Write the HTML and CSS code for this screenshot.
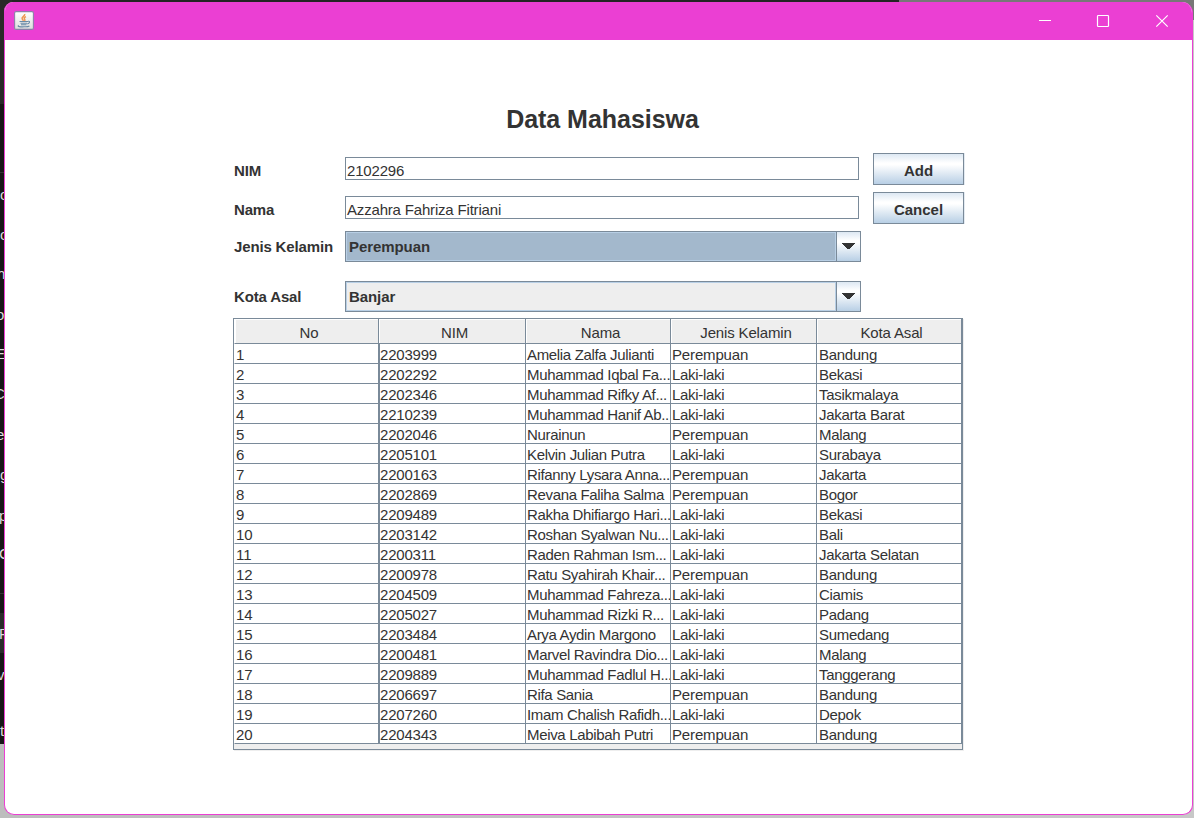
FILE: index.html
```html
<!DOCTYPE html>
<html lang="id">
<head>
<meta charset="utf-8">
<title>Data Mahasiswa</title>
<link rel="stylesheet" href="styles.css">
</head>
<body>
<div class="desktop">
  <div class="editor" id="editor"></div>
  <main class="window">
    <header class="titlebar">
      <svg class="java" width="20" height="20" viewBox="0 0 20 20">
        <defs><linearGradient id="g" x2="0" y2="1"><stop stop-color="#fff"/><stop offset="1" stop-color="#dcdcdc"/></linearGradient></defs>
        <rect x=".6" y=".6" width="18.8" height="17.8" rx="1.5" fill="url(#g)" stroke="#8c7fa8" stroke-width="1.1"/>
        <path d="M10.700 3c.8 2-3.200 2.600-2.600 4.700.2.900 1.200 1.400 1.400 2M12 5.700c-1.800.9-2.200 1.500-1.300 2.500.5.700.2 1.200-.3 1.600" fill="none" stroke="#ee9550" stroke-width="1.500"/>
        <path d="M5.500 10.500h8.500M6.500 12.300h6.500M7 13.700h5.500M14 10.300c2.500-.5 1.600 2.300-.7 2.600M4.800 14.500c-2.300 1 2 1.500 5.200 1.300 3 0 5-.5 5.400-1" fill="none" stroke="#6a8ba6" stroke-width="1.100"/>
      </svg>
      <svg class="controls" width="134" height="14" viewBox="0 0 134 14" fill="none" stroke="#fff">
        <path d="M0 6.500h12"/>
        <rect x="58.500" y="1.500" width="11" height="11" rx=".8" stroke-width="1.200"/>
        <path d="M117.300 1.300l11.400 11.400M128.700 1.300l-11.400 11.400" stroke-width="1.200"/>
      </svg>
    </header>
    <section class="content">
      <h1 class="heading">Data Mahasiswa</h1>
      <div class="row">
        <label class="label">NIM</label><div class="field">2102296</div><div class="button">Add</div>
      </div>
      <div class="row row-name">
        <label class="label">Nama</label><div class="field">Azzahra Fahriza Fitriani</div><div class="button">Cancel</div>
      </div>
      <div class="row row-gender">
        <label class="label">Jenis Kelamin</label>
        <div class="combo"><div class="value focused">Perempuan</div><div class="arrow"><svg width="13" height="6" viewBox="0 0 13 6" shape-rendering="crispEdges"><path d="M0 0h13v1h-1v1h-1v1h-1v1H9v1H8v1H5V5H4V4H3V3H2V2H1V1H0z" fill="#333"/></svg></div></div>
      </div>
      <div class="row row-city">
        <label class="label">Kota Asal</label>
        <div class="combo"><div class="value">Banjar</div><div class="arrow"><svg width="13" height="6" viewBox="0 0 13 6" shape-rendering="crispEdges"><path d="M0 0h13v1h-1v1h-1v1h-1v1H9v1H8v1H5V5H4V4H3V3H2V2H1V1H0z" fill="#333"/></svg></div></div>
      </div>
      <div class="table">
        <div class="line head"><span class="cell">No</span><span class="cell">NIM</span><span class="cell">Nama</span><span class="cell">Jenis Kelamin</span><span class="cell">Kota Asal</span></div>
        <div id="rows"></div>
      </div>
    </section>
  </main>
</div>
<script src="app.js"></script>
</body>
</html>
```

FILE: styles.css
```css
* { box-sizing: border-box; }
body { margin: 0; font-family: "Liberation Sans", Arial, sans-serif; font-size: 15px; color: #333; }
.desktop { position: relative; width: 1194px; height: 818px; overflow: hidden; padding: 2px 1px 3px 4px;
  background: linear-gradient(90deg, #242424 0 899px, #777 899px) 0 0 / 100% 20px no-repeat, linear-gradient(90deg, #bdbdbd, #c8c8c8); }
.editor { position: absolute; left: 0; top: 0; width: 12px; height: 744px; overflow: hidden;
  background: linear-gradient(#292929 0 104px, #171717 104px 172px, #333 172px 173px, #171717 173px 593px, #333 593px 594px, #171717 594px 613px, #2b2b2b 613px 653px, #171717 653px); }
.glyph { position: absolute; line-height: 18px; color: #ddd; font-size: 15px; }
.window { position: relative; height: 813px; background: #fff; border: 1px solid #eb3fd3; border-top: 0; border-radius: 9px 11px 10px 10px; overflow: hidden; }
.titlebar { height: 38px; background: #eb3fd3; display: flex; align-items: flex-start; justify-content: space-between; padding: 9px 19px 0 9px; }
.controls { margin-top: 3px; }
.content { padding: 60px 228px 0 228px; }
.heading { margin: 0 0 14px; padding: 4px 0 0 8px; height: 39px; text-align: center; font-size: 25px; line-height: 30px; letter-spacing: -.03px; }
.row { display: flex; height: 32px; align-items: flex-start; }
.row-name { margin-top: 7px; }
.row-gender { margin-top: 7px; height: 31px; }
.row-city { margin-top: 19px; height: 31px; }
.label { flex: none; width: 112px; padding-left: 1px; font-weight: bold; line-height: 36px; letter-spacing: -.15px; }
.row-gender .label, .row-city .label { line-height: 32px; }
.field { flex: none; width: 514px; height: 23px; margin: 4px 14px 0 0; border: 1px solid #7a8a99; padding-left: 1px; line-height: 26px; white-space: nowrap; letter-spacing: -.18px; }
.button { flex: none; width: 91px; height: 32px; border: 1px solid #7a8a99; box-shadow: 1px 0 #e4ebf2; text-align: center; font-weight: bold; line-height: 34px;
  background: linear-gradient(#dde8f3, #fff 30%, #fff 36%, #b8cfe5); }
.combo { flex: none; width: 516px; height: 31px; display: flex; border: 1px solid #7a8a99; }
.value { width: 490px; border: 1px solid #b8cfe5; background: #eee; padding-left: 2px; font-weight: bold; line-height: 28px; letter-spacing: -.08px; }
.focused { background: #a3b8cc; }
.arrow { width: 24px; border-left: 1px solid #7a8a99; padding: 11px 0 0 5px; background: linear-gradient(#dde8f3, #fff 30%, #fff 36%, #b8cfe5); line-height: 0; }
.table { width: 730px; height: 432px; margin-top: 6px; border: 1px solid #7a8a99; background: #eee; box-shadow: 1px 1px #eee; }
.line { display: grid; grid-template-columns: 145px 147px 145px 146px 145px; height: 20px; }
.cell { overflow: hidden; white-space: nowrap; background: #fff; border-right: 1px solid #7a8a99; border-bottom: 1px solid #7a8a99; padding-left: 1px; line-height: 21px; letter-spacing: -.3px; }
.cell:last-child { padding-left: 2px; }
.cell:first-child { border-left: 1px solid #fff; letter-spacing: -.1px; }
.line:not(.head) .cell:nth-child(2) { border-left: 1px solid #7a8a99; padding-left: 0; letter-spacing: -.2px; }
.line:not(.head) .cell:nth-child(3) { letter-spacing: -.34px; }
.line .cell.wide { letter-spacing: -.15px; }
.head { height: 25px; }
.head .cell { background: #eee; padding: 0 0 0 5px; text-align: center; line-height: 27px; box-shadow: inset 1px 1px #fff; letter-spacing: -.15px; }
```

FILE: app.js
```js
const P = 'Perempuan', L = 'Laki-laki';
const students = [
  ['2203999', 'Amelia Zalfa Julianti', P, 'Bandung'],
  ['2202292', 'Muhammad Iqbal Fa...', L, 'Bekasi'],
  ['2202346', 'Muhammad Rifky Af...', L, 'Tasikmalaya'],
  ['2210239', 'Muhammad Hanif Ab...', L, 'Jakarta Barat'],
  ['2202046', 'Nurainun', P, 'Malang'],
  ['2205101', 'Kelvin Julian Putra', L, 'Surabaya'],
  ['2200163', 'Rifanny Lysara Anna...', P, 'Jakarta'],
  ['2202869', 'Revana Faliha Salma', P, 'Bogor'],
  ['2209489', 'Rakha Dhifiargo Hari...', L, 'Bekasi'],
  ['2203142', 'Roshan Syalwan Nu...', L, 'Bali'],
  ['2200311', 'Raden Rahman Ism...', L, 'Jakarta Selatan'],
  ['2200978', 'Ratu Syahirah Khair...', P, 'Bandung'],
  ['2204509', 'Muhammad Fahreza...', L, 'Ciamis'],
  ['2205027', 'Muhammad Rizki R...', L, 'Padang'],
  ['2203484', 'Arya Aydin Margono', L, 'Sumedang'],
  ['2200481', 'Marvel Ravindra Dio...', L, 'Malang'],
  ['2209889', 'Muhammad Fadlul H...', L, 'Tanggerang'],
  ['2206697', 'Rifa Sania', P, 'Bandung'],
  ['2207260', 'Imam Chalish Rafidh...', L, 'Depok'],
  ['2204343', 'Meiva Labibah Putri', P, 'Bandung']
];
document.getElementById('rows').innerHTML = students.map((s, i) =>
  '<div class="line">' + [i + 1, ...s].map(t => `<span class="cell${t === P ? ' wide' : ''}">${t}</span>`).join('') + '</div>').join('');

// Text of the editor behind the window, visible only along its left edge.
const glyphs = [['c', 186, 0], ['c', 226, 0], ['h', 265, -3], ['o', 306, -4], ['E', 345, -5], ['C', 385, -6], ['e', 426, -4], ['g', 466, 0], ['p', 507, -1], ['C', 545, -1], ['P', 625, -1], ['v', 666, -3], ['t', 722, 0]];
document.getElementById('editor').innerHTML = glyphs.map(([c, y, x]) => `<span class="glyph" style="top:${y}px;left:${x}px">${c}</span>`).join('');
```
